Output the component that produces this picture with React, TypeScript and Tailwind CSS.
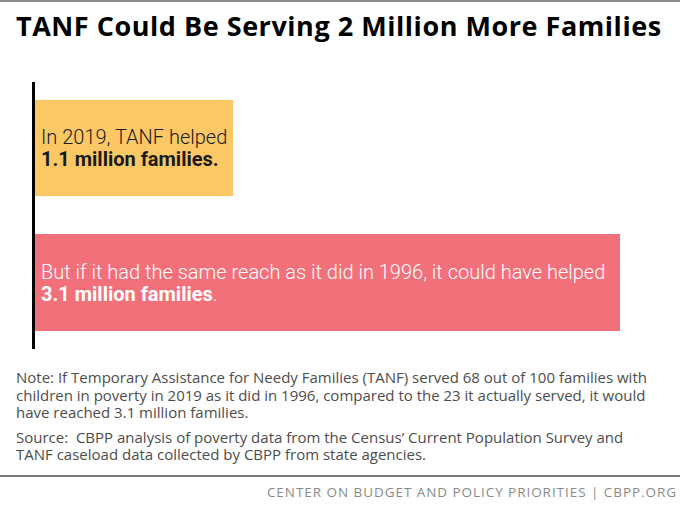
export default function App() {
  return (
    <div className="w-[680px] h-[506px] bg-white border-t-2 border-[#8c8c8c] font-['Open_Sans',sans-serif] overflow-hidden">
      <h1 className="pt-[8px] pl-[16px] text-[27px] leading-[32px] font-bold text-black whitespace-nowrap tracking-[0.02em]">
        TANF Could Be Serving 2 Million More Families
      </h1>

      {/* chart */}
      <div className="mt-[40px] ml-[32px] border-l-[3px] border-black py-[18px] flex flex-col gap-[38px]">
        <div className="w-[198px] h-[96px] bg-[#fcc866] flex items-center pl-[6px]">
          <p className="font-['Roboto',sans-serif] text-[20px] leading-[22px] text-[#1a1a1a]">
            <span className="font-light">In 2019, TANF helped</span>
            <br />
            <span className="font-bold">1.1 million families.</span>
          </p>
        </div>
        <div className="w-[585px] h-[97px] bg-[#f2707a] flex items-center pl-[6px]">
          <p className="font-['Roboto',sans-serif] text-[20px] leading-[22px] text-white">
            <span className="font-light">But if it had the same reach as it did in 1996, it could have helped</span>
            <br />
            <span className="font-bold">3.1 million families</span>
            <span className="font-light">.</span>
          </p>
        </div>
      </div>

      {/* notes */}
      <div className="mt-[20px] px-[16px] text-[15px] leading-[17.5px] text-[#4d4d4d] whitespace-nowrap">
        <p>
          Note: If Temporary Assistance for Needy Families (TANF) served 68 out of 100 families with
          <br />
          children in poverty in 2019 as it did in 1996, compared to the 23 it actually served, it would
          <br />
          have reached 3.1 million families.
        </p>
        <p className="mt-[7px]">
          Source:&nbsp; CBPP analysis of poverty data from the Census’ Current Population Survey and
          <br />
          TANF caseload data collected by CBPP from state agencies.
        </p>
      </div>

      {/* footer */}
      <div className="mt-[11px] border-t-2 border-[#7a7a7a] pt-[7px] pr-[3px] text-right text-[13.5px] leading-[16px] text-[#8a8a8a] tracking-[0.07em]">
        CENTER ON BUDGET AND POLICY PRIORITIES | CBPP.ORG
      </div>
    </div>
  );
}
